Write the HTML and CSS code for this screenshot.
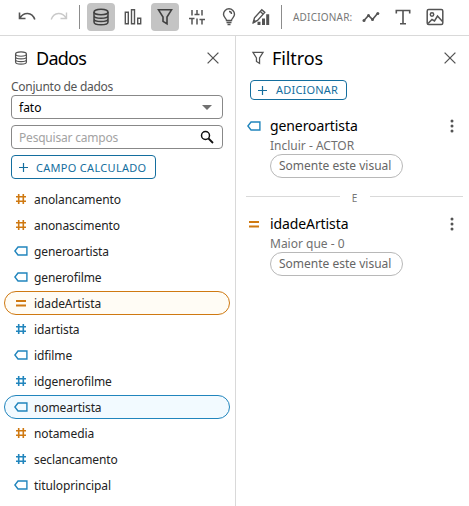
FILE: index.html
```html
<!DOCTYPE html>
<html lang="pt">
<head>
<meta charset="utf-8">
<title>Dados e filtros</title>
<link rel="stylesheet" href="styles.css">
</head>
<body>
<svg class="defs" aria-hidden="true">
  <symbol id="db" viewBox="0 0 18 18"><g fill="none" stroke="currentColor" stroke-width="1.5"><ellipse cx="9" cy="4" rx="7" ry="2.8"/><path d="M2 4v10c0 1.6 3 2.8 7 2.8s7-1.200 7-2.800V4M2 7.400c0 1.600 3 2.800 7 2.800s7-1.200 7-2.800M2 10.800c0 1.600 3 2.800 7 2.800s7-1.200 7-2.800"/></g></symbol>
  <symbol id="funnel" viewBox="0 0 18 18"><path d="M2.500 1.800h13L11 9v6.800L7 13.400V9z" fill="none" stroke="currentColor" stroke-width="1.600"/></symbol>
  <symbol id="close" viewBox="0 0 12 12"><path d="M.6.6l10.800 10.800M11.400.6L.6 11.400" stroke="currentColor" stroke-width="1.300"/></symbol>
  <symbol id="plus" viewBox="0 0 9 9"><path d="M4.500 0v9M0 4.500h9" stroke="currentColor" stroke-width="1.200"/></symbol>
  <symbol id="hash" viewBox="0 0 14 12"><path d="M4.700 1v10M9.300 1v10M2 3.700h10M2 8.300h10" stroke="currentColor" stroke-width="1.600"/></symbol>
  <symbol id="tag" viewBox="0 0 14 12"><path d="M4 2h8.900v8H4L.9 6z" fill="none" stroke="currentColor" stroke-width="1.400"/></symbol>
  <symbol id="equal" viewBox="0 0 14 12"><path d="M2 4h10M2 8.500h10" stroke="currentColor" stroke-width="1.800"/></symbol>
  <symbol id="more" viewBox="0 0 4 14"><g fill="currentColor"><circle cx="2" cy="2" r="1.500"/><circle cx="2" cy="7" r="1.500"/><circle cx="2" cy="12" r="1.500"/></g></symbol>
</svg>
<header class="toolbar">
  <button class="tool undo"><svg width="18" height="18" viewBox="0 0 18 18" fill="none" stroke="currentColor" stroke-width="1.600"><path d="M1.500 4.500v6h6M2 10C5.500 4 14 3.500 16.800 11.500"/></svg></button>
  <button class="tool redo"><svg width="18" height="18" viewBox="0 0 18 18" fill="none" stroke="currentColor" stroke-width="1.400"><path d="M16.500 4.500v6h-6M16 10C12.500 4 4 3.500 1.200 11.500"/></svg></button>
  <span class="rule"></span>
  <button class="tool active"><svg width="18" height="18"><use href="#db"/></svg></button>
  <button class="tool"><svg width="18" height="18" viewBox="0 0 18 18" fill="none" stroke="currentColor" stroke-width="1.400"><path d="M1.300 4.200h3v11.600h-3zM7.500 1.800h3v14h-3zM13.700 10.200h3v5.600h-3z"/></svg></button>
  <button class="tool active"><svg width="18" height="18"><use href="#funnel"/></svg></button>
  <button class="tool"><svg width="18" height="18" viewBox="0 0 18 18" fill="none" stroke="currentColor" stroke-width="1.500"><path d="M4 2v5.500M4 10.500v6M9 2v4.500M9 10.500v6M14 2v5.500M14 11.500v5M1 10.500h5.500M6.500 6.500h5M11.500 11.500H17"/></svg></button>
  <button class="tool"><svg width="18" height="18" viewBox="0 0 18 18" fill="none" stroke="currentColor" stroke-width="1.400"><path d="M6.500 12.500c0-2-3-3-3-6.200a5.500 5.500 0 0 1 11 0c0 3.200-3 4.200-3 6.200zM6.500 14.500h5M7.500 16.500h3M9 3.500c1.500 0 2.500 1 2.500 2.500"/></svg></button>
  <button class="tool"><svg width="18" height="18" viewBox="0 0 18 18"><path d="M1.200 14.500l1.300-4.700L9.800 1.700l3 2.700-7.300 8.100zM8.300 3.500l3 2.700" fill="none" stroke="currentColor" stroke-width="1.400"/><path d="M.6 16l1.500-4.500 2.500 2.300zM5.500 13.800h3v3.200h-3zM10 10.500h3V17h-3zM14.200 6.300h3V17h-3z" fill="currentColor"/></svg></button>
  <span class="rule second"></span>
  <span class="add-label">ADICIONAR:</span>
  <button class="tool line"><svg width="18" height="18" viewBox="0 0 18 18"><path d="M2 12.500l4.500-5 4 4 5-6" fill="none" stroke="currentColor" stroke-width="1.600"/><g fill="currentColor"><circle cx="2" cy="12.500" r="1.500"/><circle cx="6.500" cy="7.500" r="1.500"/><circle cx="10.500" cy="11.500" r="1.500"/><circle cx="15.800" cy="5.500" r="1.500"/></g></svg></button>
  <button class="tool"><svg width="18" height="18" viewBox="0 0 18 18" fill="none" stroke="currentColor" stroke-width="1.600"><path d="M2.300 5.500V2.500h13.400v3M9 2.500v13M6 15.800h6"/></svg></button>
  <button class="tool"><svg width="18" height="18" viewBox="0 0 18 18" fill="none" stroke="currentColor" stroke-width="1.500"><rect x="1.200" y="1.500" width="15.600" height="15" rx="1.500"/><circle cx="6" cy="6.500" r="1.700"/><path d="M2 15.500l4-4 2.500 1.500 3-5 5 5.500"/></svg></button>
</header>
<main class="panels">
  <section class="panel data">
    <div class="head"><svg class="head-icon" width="14" height="14"><use href="#db"/></svg><h2 class="title-data">Dados</h2><svg class="close" width="12" height="12"><use href="#close"/></svg></div>
    <div class="controls">
      <label class="label">Conjunto de dados</label>
      <div class="box select"><span>fato</span><i class="caret"></i></div>
      <div class="box search"><span>Pesquisar campos</span><svg width="14" height="14" viewBox="0 0 14 14" fill="none" stroke="#111"><circle cx="5.500" cy="5.500" r="4" stroke-width="1.500"/><path d="M8.500 8.500l4.500 4.500" stroke-width="1.800"/></svg></div>
      <button class="btn calc"><svg width="9" height="9"><use href="#plus"/></svg><span>CAMPO CALCULADO</span></button>
    </div>
    <ul class="fields">
      <li class="orange"><svg><use href="#hash"/></svg><span>anolancamento</span></li>
      <li class="orange"><svg><use href="#hash"/></svg><span>anonascimento</span></li>
      <li><svg><use href="#tag"/></svg><span>generoartista</span></li>
      <li><svg><use href="#tag"/></svg><span>generofilme</span></li>
      <li class="orange picked"><svg><use href="#equal"/></svg><span>idadeArtista</span></li>
      <li><svg><use href="#hash"/></svg><span>idartista</span></li>
      <li><svg><use href="#tag"/></svg><span>idfilme</span></li>
      <li><svg><use href="#hash"/></svg><span>idgenerofilme</span></li>
      <li class="picked"><svg><use href="#tag"/></svg><span>nomeartista</span></li>
      <li class="orange"><svg><use href="#hash"/></svg><span>notamedia</span></li>
      <li><svg><use href="#hash"/></svg><span>seclancamento</span></li>
      <li><svg><use href="#tag"/></svg><span>tituloprincipal</span></li>
    </ul>
  </section>
  <section class="panel filters">
    <div class="head"><svg class="head-icon" width="14" height="14"><use href="#funnel"/></svg><h2 class="title-filters">Filtros</h2><svg class="close" width="12" height="12"><use href="#close"/></svg></div>
    <button class="btn add"><svg width="9" height="9"><use href="#plus"/></svg><span>ADICIONAR</span></button>
    <article class="filter">
      <svg class="kind" width="14" height="12"><use href="#tag"/></svg>
      <div class="body"><h3>generoartista</h3><p class="incl">Incluir - ACTOR</p><span class="pill">Somente este visual</span></div>
      <svg class="more" width="4" height="14"><use href="#more"/></svg>
    </article>
    <div class="and"><span>E</span></div>
    <article class="filter orange">
      <svg class="kind" width="14" height="12"><use href="#equal"/></svg>
      <div class="body"><h3>idadeArtista</h3><p>Maior que - 0</p><span class="pill">Somente este visual</span></div>
      <svg class="more" width="4" height="14"><use href="#more"/></svg>
    </article>
  </section>
</main>
</body>
</html>
```
FILE: styles.css
```css
* { box-sizing: border-box; margin: 0; padding: 0; }
body { width: 469px; height: 506px; overflow: hidden; background: #fff; color: #16191f; font-family: "Noto Sans", sans-serif; font-size: 12px; }
svg { display: block; flex: none; }
button { font: inherit; color: inherit; background: none; border: 0; }
.defs { width: 0; height: 0; position: absolute; }

.toolbar { display: flex; align-items: center; height: 36px; padding: 0 0 2px 13px; border-bottom: 1px solid #d9d9d9; color: #545454; }
.tool { display: flex; align-items: center; justify-content: center; flex: none; width: 28px; height: 28px; margin-right: 4px; border-radius: 4px; }
.tool.active { background: #c4c4c4; color: #404040; }
.tool.redo { color: #c9c9c9; margin-right: 2px; }
.rule { flex: none; width: 1px; height: 24px; background: #8c8c8c; margin: 0 7px 0 4px; }
.rule.second { margin-left: 2px; }
.add-label { width: 60px; margin-left: 4px; font-size: 10px; letter-spacing: .2px; color: #777; white-space: nowrap; }
.tool.line { margin-left: 4px; }

.panels { display: flex; height: 470px; }
.panel.data { width: 235px; }
.panel.filters { width: 234px; border-left: 1px solid #d9d9d9; }
.head { display: flex; align-items: center; height: 45px; padding: 0 16px 1px 14px; color: #545454; }
.head h2 { margin: -1px 0 0 8px; font-size: 18px; font-weight: 400; line-height: 24px; color: #000; }
.title-data { letter-spacing: -.75px; }
.title-filters { letter-spacing: -.1px; }
.close { margin-left: auto; }
.filters .head { padding-right: 13px; padding-left: 15px; }
.filters .head h2 { margin-left: 7px; }

.controls { display: flex; flex-direction: column; align-items: flex-start; padding: 0 12px 0 11px; }
.label { height: 14px; line-height: 12px; color: #545454; letter-spacing: -.27px; }
.box { display: flex; align-items: center; justify-content: space-between; width: 212px; height: 24px; padding: 0 9px 0 7px; border: 1px solid #888; border-radius: 4px; }
.select { color: #000; padding-right: 10px; }
.caret { border: 5px solid transparent; border-top-color: #707070; border-bottom: 0; }
.search { margin: 6px 0; padding-right: 8px; color: #a3a3a3; letter-spacing: -.2px; }
.btn { display: flex; align-items: center; border: 1px solid #146e9e; border-radius: 4px; color: #146e9e; white-space: nowrap; }
.calc { width: 145px; height: 24px; padding-left: 7px; gap: 8px; font-size: 11px; letter-spacing: .3px; }

.fields { list-style: none; padding: 8px 5px 0 4px; }
.fields li { display: flex; align-items: center; width: 226px; height: 24px; margin-bottom: 2px; padding-left: 9px; border: 1px solid transparent; border-radius: 12px; color: #2185bd; }
.fields svg { width: 14px; height: 12px; margin-right: 6px; }
.fields span { color: #232323; letter-spacing: -.1px; }
.fields .orange, .filter.orange { color: #cf7911; }
.fields .picked { border-color: #2185bd; background: #f2faff; }
.fields .orange.picked { border-color: #cf7911; background: #fffcf5; }

.add { width: 97px; height: 20px; margin: -1px 0 0 14px; padding-left: 7px; gap: 9px; font-size: 11px; letter-spacing: .2px; }
.add span { margin-top: -1px; }
.filter { display: flex; align-items: flex-start; height: 78px; padding: 0 15px 0 11px; color: #2185bd; }
.add + .filter { margin-top: 15px; height: 73px; }
.kind { margin-top: 5px; }
.body { margin-left: 9px; }
.body h3 { height: 23px; font-size: 14px; line-height: 21px; font-weight: 400; color: #000; letter-spacing: -.1px; }
.body p { height: 16px; line-height: 15px; color: #707070; }
.pill { display: flex; align-items: center; width: 133px; height: 24px; padding: 0 0 1px 8px; border: 1px solid #b8b8b8; border-radius: 12px; color: #666; white-space: nowrap; }
.more { margin: 4px 0 0 auto; color: #545454; }
.and { display: flex; align-items: center; height: 19px; margin: 0 6px 6px 10px; font-size: 10px; color: #777; }
.and::before, .and::after { content: ""; flex: 1; height: 1px; margin-bottom: 2px; background: #d9d9d9; }
.and span { width: 30px; text-align: center; }
```
